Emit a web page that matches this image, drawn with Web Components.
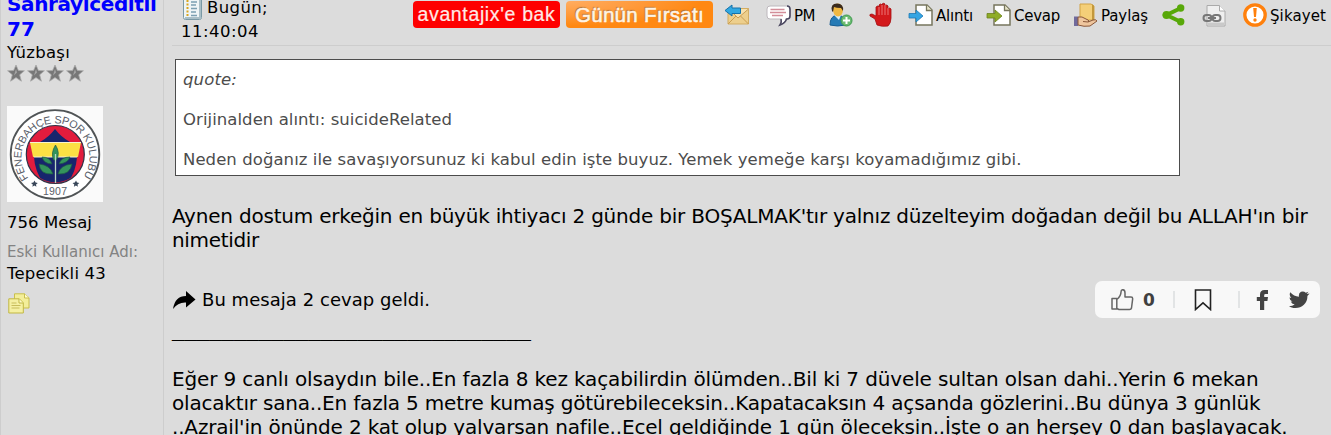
<!DOCTYPE html>
<html lang="tr">
<head>
<meta charset="utf-8">
<title>Forum</title>
<style>
  body {
    margin: 0;
    background: #dcdcdc;
    color: #000;
    font-family: Verdana, "DejaVu Sans", sans-serif;
    font-size: 16.5px;
    overflow: hidden;
  }
</style>
</head>
<body>
<forum-post></forum-post>

<script>
const ICONS = {
  note: `<rect x="2.500" y="-3" width="18" height="22.500" rx="2" fill="#eef5f6" stroke="#7a99a5"/><path d="M19 0v18H4" fill="none" stroke="#a9bfc7" stroke-width="2"/><path d="M6.500 0v17" stroke="#d9a520" stroke-width="2" stroke-dasharray="2 1.500"/><path d="M10 2h6M10 5h5M10 8.500h6M10 12h5M10 15.500h6" stroke="#7ba0b2" stroke-width="1.500"/>`,
  mail: `<path d="M3 8.500h20.500V24H3z" fill="#edcf8d" stroke="#d3ad62"/><path d="M3 24l8-8M23.500 24l-8-8M4 9l9 9 10.500-9" fill="#f7e2b0" stroke="#c99d52"/><path d="M0 10.500L7 5v3h8.500v5.500H7V16z" fill="#31a8e2" stroke="#1672aa"/>`,
  pm: `<path d="M3 6h17q3 0 3 3v7q0 3-3 3h-.5q-1 4-6.500 6 2-3 1-6H3q-3 0-3-3V9q0-3 3-3z" fill="#fff" stroke="#bdb8bd"/><path d="M20 6q3 0 3 3v7q0 3-3 3h-.5q-1 4-6.500 6 2-3 1-6" fill="none" stroke="#4b4760" stroke-width="1.600"/><path d="M3.500 9.500h14M3 12.500h16M5 15.500h11" stroke="#d38d99" stroke-width="1.600"/>`,
  user: `<path d="M1 25q0-9 7-10 8 0 9 10-9 2-16 0z" fill="#257ab5" stroke="#165d92"/><path d="M5 15l5 5 2-5" fill="#d6edf7"/><ellipse cx="9" cy="10" rx="5" ry="6.500" fill="#f0b842"/><path d="M3 11Q1 3.500 8 3.500q7 0 6 7.500l-2-3q-5 0-7-1l-1 5" fill="#3b2b1e"/><circle cx="17.500" cy="20.500" r="5.500" fill="#6cbb72" stroke="#3c9a4c"/><path d="M17.500 17v7M14 20.500h7" stroke="#fff" stroke-width="2"/>`,
  hand: `<path d="M8 25l-2-6-5-3q-1-2 2-2l4 2V7q2-2 3 0V5q1.500-2 3 0V4q2-1.500 3 0v2q2-2 3 0v3q2-2 3 0v9q0 5-3 8-6 1-11-1z" fill="#d3191b" stroke="#a30f12" stroke-width=".8"/><path d="M10 7v8M13 5v10M16 5v10M19 8v7" stroke="#eb7777"/>`,
  quote: `<path d="M7 5h11l5 5v15H7z" fill="#fff" stroke="#77765d" stroke-width="1.500"/><path d="M17.500 5v5.500H23" fill="#e8e5c9" stroke="#77765d" stroke-width="1.300"/><path d="M0 13.500h7V10l7 6-7 6v-4H0z" fill="#35a5e3" stroke="#1d79b5" stroke-width=".8"/>`,
  reply: `<path d="M7 5h11l5 5v15H7z" fill="#fff" stroke="#77765d" stroke-width="1.500"/><path d="M17.500 5v5.500H23" fill="#e8e5c9" stroke="#77765d" stroke-width="1.300"/><path d="M0 13.500h8V10l7 6-7 6v-4H0z" fill="#8fac27" stroke="#6c821d" stroke-width=".8"/>`,
  give: `<path d="M6 4h11l3 2v14H6z" fill="#f4cf78" stroke="#d2a344"/><path d="M18 4l2 2v14h-2z" fill="#c3983b"/><path d="M0 16.500h4V26H0z" fill="#706a9c"/><path d="M4 17h4l6 3q2 1 0 2l5-2q3-1 4 1l-7 5q-6 1-12-1z" fill="#efc69e" stroke="#8a5739"/><path d="M14 22l-5-.500" stroke="#8a5739"/>`,
  share: `<path d="M19 8L4.500 15 19 22" fill="none" stroke="#58a809" stroke-width="4"/><circle cx="18.700" cy="8" r="3.700" fill="#58a809"/><circle cx="4.500" cy="15" r="4" fill="#58a809"/><circle cx="18.700" cy="21.800" r="3.700" fill="#58a809"/>`,
  link: `<path d="M5 5.500h12.500L23 11v15H5z" fill="#efefef" stroke="#aaa"/><path d="M17.500 5.500V11H23" fill="#fff" stroke="#aaa"/><path d="M6 22.500h16V26H6z" fill="#c9c9c9"/><g fill="none" stroke="#777" stroke-width="2"><rect x="1.500" y="15" width="8" height="6" rx="3"/><rect x="10.500" y="15" width="8" height="6" rx="3"/><path d="M6 18h8"/></g>`,
  warn: `<circle cx="12" cy="15" r="10.200" fill="#fff" stroke="#ff800c" stroke-width="3.300"/><path d="M10.200 8h3.600l-.8 9h-2z" fill="#ff800c"/><circle cx="12" cy="20" r="1.700" fill="#ff800c"/>`,
};

const rowIcon = (name, h = 28) =>
  `<svg width="24" height="${h}" viewBox="0 0 24 ${h}">${ICONS[name]}</svg>`;

// One line of text, tracked so that it fills the width given in "w".
class TextLine extends HTMLElement {
  constructor() {
    super();
    this.attachShadow({ mode: 'open' });
    this.shadowRoot.innerHTML = `
      <style>
        :host { display: block; white-space: nowrap; }
        span { display: inline-block; }
      </style>
      <span><slot></slot></span>
    `;
  }

  connectedCallback() {
    const span = this.shadowRoot.querySelector('span');
    const target = parseFloat(this.getAttribute('w'));
    const count = this.textContent.length;
    if (!target || !count) return;
    const natural = span.getBoundingClientRect().width;
    span.style.letterSpacing = (target - natural) / count + 'px';
  }
}

class ToolItem extends HTMLElement {
  constructor() {
    super();
    this.attachShadow({ mode: 'open' });
  }

  connectedCallback() {
    this.shadowRoot.innerHTML = `
      <style>
        :host { display: flex; gap: 3px; height: 30px; font-size: 15px; line-height: 32px; }
        svg { flex: none; display: block; overflow: visible; }
      </style>
      ${rowIcon(this.getAttribute('icon'))}<slot></slot>
    `;
  }
}

class PromoBadge extends HTMLElement {
  constructor() {
    super();
    this.attachShadow({ mode: 'open' });
    this.shadowRoot.innerHTML = `
      <style>
        :host {
          display: flex;
          justify-content: center;
          width: 147px;
          height: 27px;
          margin-top: 1px;
          border-radius: 4px;
          background: #fe0000;
          color: #ffe9e6;
          font: 19.500px/26px "Liberation Sans", Arial, sans-serif;
          -webkit-text-stroke: .2px #ffe9e6;
        }
        :host([kind="deal"]) {
          background: radial-gradient(ellipse at 0 0, #ffad62 0, #ff9a3b 35%, #ff8812 65%);
          font-size: 20.500px;
          line-height: 28px;
          color: #fff3e4;
          -webkit-text-stroke: .6px #fff3e4;
          text-shadow: -1px -1px 1px #a96f37;
        }
      </style>
      <slot></slot>
    `;
  }
}

class PostToolbar extends HTMLElement {
  constructor() {
    super();
    this.attachShadow({ mode: 'open' });
    this.shadowRoot.innerHTML = `
      <style>
        :host {
          display: grid;
          grid-template-columns: 232px 153px 159px 42px 62px 40px 40px 78px 87px 88px 40px 41px 1fr;
          height: 45px;
          padding-left: 9px;
          border-bottom: 1px solid #cdcdcd;
        }
        .date { margin-top: -3px; }
        .first { display: flex; gap: 2px; height: 22px; line-height: 21px; }
        .first svg { margin-top: 3px; }
        .first text-line { line-height: 21px; }
      </style>
      <div class="date">
        <div class="first">${rowIcon('note', 21)}<text-line w="61">Bugün;</text-line></div>
        <text-line w="78" style="line-height:26px">11:40:04</text-line>
      </div>
      <promo-badge><text-line w="138">avantajix'e bak</text-line></promo-badge>
      <promo-badge kind="deal"><text-line w="129">Günün Fırsatı</text-line></promo-badge>
      <tool-item icon="mail"></tool-item>
      <tool-item icon="pm"><text-line w="21">PM</text-line></tool-item>
      <tool-item icon="user"></tool-item>
      <tool-item icon="hand"></tool-item>
      <tool-item icon="quote"><text-line w="37">Alıntı</text-line></tool-item>
      <tool-item icon="reply"><text-line w="46">Cevap</text-line></tool-item>
      <tool-item icon="give"><text-line w="47">Paylaş</text-line></tool-item>
      <tool-item icon="share"></tool-item>
      <tool-item icon="link"></tool-item>
      <tool-item icon="warn"><text-line w="56">Şikayet</text-line></tool-item>
    `;
  }
}

class ClubAvatar extends HTMLElement {
  constructor() {
    super();
    this.attachShadow({ mode: 'open' });
    this.shadowRoot.innerHTML = `
      <style>
        :host { display: block; width: 96px; height: 96px; background: #fafafa; }
        svg { display: block; }
        text { font-family: "Liberation Sans", Arial, sans-serif; fill: #5a606a; }
      </style>
      <svg width="96" height="96" viewBox="0 0 96 96">
        <defs>
          <path id="ring" d="M21.500 72A34 34 0 1 1 75.500 72"/>
        </defs>
        <clipPath id="disk"><circle cx="48.300" cy="48.500" r="28"/></clipPath>
        <circle cx="48" cy="48.500" r="44.300" fill="#fff" stroke="#505456" stroke-width="1.800"/>
        <text font-size="10.800"><textPath href="#ring" textLength="149">FENERBAHÇE SPOR KULUBU</textPath></text>
        <text x="36" y="88.500" font-size="10.500" textLength="24">1907</text>
        <path d="M27.500 74.500l1 2 2.300.4-1.800 1.500.4 2.300-2-1.200-2 1.200.4-2.300-1.800-1.500 2.400-.4zM69 74.500l1 2 2.300.4-1.800 1.500.4 2.300-2-1.200-2 1.200.4-2.300-1.800-1.500 2.400-.4z" fill="#39475a"/>
        <circle cx="48.300" cy="48.500" r="29" fill="#e21c3d" stroke="#303246" stroke-width="1.200"/>
        <g clip-path="url(#disk)">
          <path d="M33 36Q42 31 48 23q6 8 15 13z" fill="#17256d"/>
          <path d="M27 51h43q-1 16-11 28H38Q28 67 27 51z" fill="#17256d"/>
        </g>
        <path d="M23 36.500h51l-3 14.500H26z" fill="#fce044"/>
        <path d="M23 36.500h51M27 51h43" stroke="#f7f3cf"/>
        <path d="M48.500 39q5 8 1 15h-3q-3-7 2-15zM46 68q-13 1-14-10 11 1 14 10zM51 68q12 1 14-10-12 1-14 10zM45 58q-8 0-10-7 8 0 10 7zM52 58q9-1 11-7-9 0-11 7z" fill="#34935c" stroke="#1e5c43" stroke-width=".7"/>
        <path d="M48.500 48v29" stroke="#b8d8c1" stroke-width="1.300"/>
      </svg>
    `;
  }
}

class UserPanel extends HTMLElement {
  constructor() {
    super();
    this.attachShadow({ mode: 'open' });
    const star = `<svg width="19.500" height="17" viewBox="0 0 19.500 17"><path d="M10 0l2.400 5.500 6 .3-4.700 4 1.700 6.400-5.400-3.600-5.400 3.600 1.700-6.400-4.700-4 6-.3z" fill="#777" stroke="#aaa" stroke-width=".8"/><path d="M10 4l1 3.500L8 10.500z" fill="#a5a5a5"/></svg>`;
    this.shadowRoot.innerHTML = `
      <style>
        :host {
          display: block;
          box-sizing: border-box;
          width: 164px;
          padding-left: 6px;
          border: solid #cdcdcd;
          border-width: 0 1px;
          line-height: 20px;
        }
        .name { margin-top: -8px; font-size: 20px; font-weight: bold; line-height: 25px; color: #0000ff; }
        .rank { margin-top: 1px; }
        .stars { display: flex; height: 17px; margin: 2px 0 24px -1px; }
        .stars svg { flex: none; }
        .count { margin-top: 11px; }
        .old { margin: 9px 0 2px; font-size: 15px; color: #838383; }
        .copy { display: block; margin: 9px 0 0 1px; }
      </style>
      <div class="name">
        <text-line w="149.500">Sahrayıceditli</text-line>
        <text-line w="28">77</text-line>
      </div>
      <text-line class="rank" w="63">Yüzbaşı</text-line>
      <div class="stars">${star.repeat(4)}</div>
      <club-avatar></club-avatar>
      <text-line class="count" w="85">756 Mesaj</text-line>
      <text-line class="old" w="131">Eski Kullanıcı Adı:</text-line>
      <text-line w="99">Tepecikli 43</text-line>
      <svg class="copy" width="22" height="21" viewBox="0 0 22 21">
        <path d="M6.500 .8h10l4.500 4V15H6.500z" fill="#f3ee9a" stroke="#c9bf4c"/>
        <path d="M16.500 .8V5H21" fill="#fffbd0" stroke="#c9bf4c"/>
        <path d="M.8 5.800h10.500l4 4V20H.8z" fill="#f5f0a2" stroke="#c1b743"/>
        <path d="M11 6v4h4" fill="#fffbd0" stroke="#c1b743"/>
        <path d="M3.500 10h5M3.500 12.500h9M3.500 15h8" stroke="#c8bd5c"/>
      </svg>
    `;
  }
}

class QuoteBox extends HTMLElement {
  constructor() {
    super();
    this.attachShadow({ mode: 'open' });
    this.shadowRoot.innerHTML = `
      <style>
        :host {
          display: flex;
          flex-direction: column;
          gap: 20px;
          box-sizing: border-box;
          width: 1005px;
          height: 117px;
          padding: 9.500px 7px 0;
          border: 1px solid #4c4c4c;
          background: #fff;
          color: #4c4c4c;
          line-height: 20px;
        }
      </style>
      <slot></slot>
    `;
  }
}

class ActionBar extends HTMLElement {
  constructor() {
    super();
    this.attachShadow({ mode: 'open' });
    this.shadowRoot.innerHTML = `
      <style>
        :host {
          display: grid;
          grid-template-columns: 32px 30px 21px 44px 18px 33px 1fr;
          align-items: center;
          box-sizing: border-box;
          width: 225px;
          height: 37px;
          padding-left: 16px;
          border-radius: 7px;
          background: #f8f8f8;
          color: #404040;
        }
        b { font-size: 17px; }
        i { width: 2px; height: 17px; background: #e2e4e5; }
        svg { display: block; }
      </style>
      <svg width="23" height="22" viewBox="0 0 23 22" fill="none" stroke="#666" stroke-width="1.500" stroke-linejoin="round"><path d="M1 9.500h4.800V20H1zM5.800 10.500Q10 7 10 3q0-2.300 1.700-2.300Q14 .7 14 4v4h6q1.700 0 1.700 1.700L20.500 19q-.3 1.500-2 1.500H8l-2.200-1"/></svg>
      <b>0</b>
      <i></i>
      <svg width="18" height="22" viewBox="0 0 18 22" fill="none" stroke="#222" stroke-width="1.600"><path d="M1.500 1h15v19.500L9 13.800 1.500 20.500z"/></svg>
      <i></i>
      <svg width="13" height="22" viewBox="0 0 13 22" fill="#444"><path d="M4 21v-9H.8V8H4V5.500Q4 1 8.500 1H12v4H9.500Q8.200 5 8.200 6.300V8H12l-.6 4H8.200v9z"/></svg>
      <svg width="21" height="18" viewBox="0 0 24 20" fill="#444"><path d="M23.500 2.500l-2.500 3q.3 5.500-4 10Q12 20 5 19q-3-.5-5-2 4 0 6.500-2-3.500-.5-4.500-3.300h2Q.7 10.500.5 7l2.100.6Q-.2 5 1.400 1.200 5.500 6 11.400 6.300q-.8-4 2.300-5.700 3-1.200 5.500 1l3-1-2 2.500z"/></svg>
    `;
  }
}

class ForumPost extends HTMLElement {
  constructor() {
    super();
    this.attachShadow({ mode: 'open' });
    this.shadowRoot.innerHTML = `
      <style>
        :host { display: flex; height: 435px; overflow: hidden; }
        main { flex: 1; min-width: 0; padding-left: 8px; }
        quote-box { margin: 13px 0 28px 3px; }
        .body { font-size: 20px; line-height: 24px; }
        .replies { display: flex; align-items: center; height: 37px; margin-top: 29px; padding-right: 11px; font-size: 18px; }
        .replies svg { flex: none; margin-right: 6px; }
        .replies action-bar { margin-left: auto; }
        .rule { height: 24px; font-size: 24.700px; font-weight: 200; line-height: 18px; }
        .sign { margin-top: 25px; }
      </style>
      <user-panel></user-panel>
      <main>
        <post-toolbar></post-toolbar>
        <quote-box>
          <text-line w="54" style="font-style:italic">quote:</text-line>
          <text-line w="269">Orijinalden alıntı: suicideRelated</text-line>
          <text-line w="838.500">Neden doğanız ile savaşıyorsunuz ki kabul edin işte buyuz. Yemek yemeğe karşı koyamadığımız gibi.</text-line>
        </quote-box>
        <div class="body">
          <text-line w="1135.500">Aynen dostum erkeğin en büyük ihtiyacı 2 günde bir BOŞALMAK'tır yalnız düzelteyim doğadan değil bu ALLAH'ın bir</text-line>
          <text-line w="87">nimetidir</text-line>
        </div>
        <div class="replies">
          <svg width="24" height="20" viewBox="0 0 24 20"><path d="M1 19Q3 6 14 6V1l9.500 8.500L14 17.500v-5Q6 12 1 19z"/></svg>
          <text-line w="228">Bu mesaja 2 cevap geldi.</text-line>
          <action-bar></action-bar>
        </div>
        <text-line class="rule" w="359">_____________________________</text-line>
        <div class="body sign">
          <text-line w="1086.500">Eğer 9 canlı olsaydın bile..En fazla 8 kez kaçabilirdin ölümden..Bil ki 7 düvele sultan olsan dahi..Yerin 6 mekan</text-line>
          <text-line w="1088.500">olacaktır sana..En fazla 5 metre kumaş götürebileceksin..Kapatacaksın 4 açsanda gözlerini..Bu dünya 3 günlük</text-line>
          <text-line w="1115.500">..Azrail'in önünde 2 kat olup yalvarsan nafile..Ecel geldiğinde 1 gün öleceksin..İşte o an herşey 0 dan başlayacak.</text-line>
        </div>
      </main>
    `;
  }
}

customElements.define('text-line', TextLine);
customElements.define('tool-item', ToolItem);
customElements.define('promo-badge', PromoBadge);
customElements.define('post-toolbar', PostToolbar);
customElements.define('club-avatar', ClubAvatar);
customElements.define('user-panel', UserPanel);
customElements.define('quote-box', QuoteBox);
customElements.define('action-bar', ActionBar);
customElements.define('forum-post', ForumPost);
</script>
</body>
</html>
